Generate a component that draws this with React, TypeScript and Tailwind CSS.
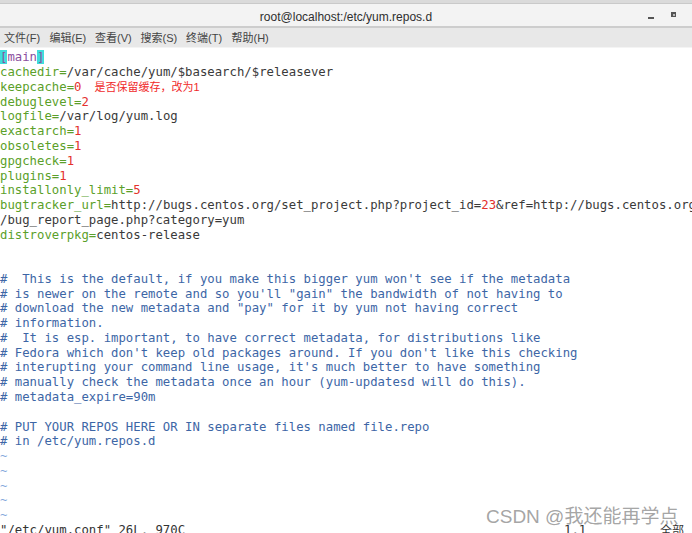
type Seg = { t: string; c: string; bg?: string }

const G = "text-[#5b9f2a]"
const R = "text-[#e3312d]"
const D = "text-[#3a3a3a]"
const B = "text-[#3d66a6]"
const P = "text-[#8a4f9e]"
const T = "text-[#86a8dc]"

const kv = (k: string, v: string, vc = R): Seg[] => [
  { t: k, c: G },
  { t: "=", c: G },
  { t: v, c: vc },
]

const comment = (s: string): Seg[] => [{ t: s, c: B }]

const lines: Seg[][] = [
  [
    { t: "[", c: P, bg: "bg-[#3fdcdc]" },
    { t: "main", c: P },
    { t: "]", c: P, bg: "bg-[#3fdcdc]" },
  ],
  kv("cachedir", "/var/cache/yum/$basearch/$releasever", D),
  kv("keepcache", "0"),
  kv("debuglevel", "2"),
  kv("logfile", "/var/log/yum.log", D),
  kv("exactarch", "1"),
  kv("obsoletes", "1"),
  kv("gpgcheck", "1"),
  kv("plugins", "1"),
  kv("installonly_limit", "5"),
  [
    { t: "bugtracker_url=", c: G },
    { t: "http://bugs.centos.org/set_project.php?project_id=", c: D },
    { t: "23", c: R },
    { t: "&ref=http://bugs.centos.org", c: D },
  ],
  [{ t: "/bug_report_page.php?category=yum", c: D }],
  kv("distroverpkg", "centos-release", D),
  [],
  [],
  comment("#  This is the default, if you make this bigger yum won't see if the metadata"),
  comment("# is newer on the remote and so you'll \"gain\" the bandwidth of not having to"),
  comment("# download the new metadata and \"pay\" for it by yum not having correct"),
  comment("# information."),
  comment("#  It is esp. important, to have correct metadata, for distributions like"),
  comment("# Fedora which don't keep old packages around. If you don't like this checking"),
  comment("# interupting your command line usage, it's much better to have something"),
  comment("# manually check the metadata once an hour (yum-updatesd will do this)."),
  comment("# metadata_expire=90m"),
  [],
  comment("# PUT YOUR REPOS HERE OR IN separate files named file.repo"),
  comment("# in /etc/yum.repos.d"),
  [{ t: "~", c: T }],
  [{ t: "~", c: T }],
  [{ t: "~", c: T }],
  [{ t: "~", c: T }],
  [{ t: "~", c: T }],
]

const menus = ["文件(F)", "编辑(E)", "查看(V)", "搜索(S)", "终端(T)", "帮助(H)"]

export default function App() {
  return (
    <div className="relative w-[692px] h-[533px] overflow-hidden bg-white flex flex-col font-['Liberation_Sans','Noto_Sans_CJK_SC',sans-serif]">
      {/* title bar */}
      <div className="shrink-0 h-[4px] bg-[#dadada] border-b border-[#c9c9c9]" />
      <div className="shrink-0 h-[24px] bg-[#f3f3f3] border-b-2 border-[#cdcdcd] flex items-center pt-[3px] relative">
        <div className="flex-1 text-center text-[12px] text-[#2e2e2e]">root@localhost:/etc/yum.repos.d</div>
        <div className="absolute right-[38px] top-[13px] w-[6px] h-[2px] bg-[#555]" />
        <div className="absolute right-[16px] top-[8px] w-[5px] h-[5px] bg-[#555] flex items-center justify-center">
          <div className="w-[2px] h-[2px] bg-[#bbb]" />
        </div>
      </div>
      {/* menu bar */}
      <div className="shrink-0 h-[20px] bg-[#e8e8e8] border-b border-[#f4f4f4] flex items-center pt-[1px] pl-[4px] gap-[11.5px] text-[11px] text-[#444]">
        {menus.map((m) => (
          <span key={m} className="w-[34px] whitespace-nowrap">{m}</span>
        ))}
      </div>
      {/* editor */}
      <div className="flex-1 min-h-0 overflow-hidden font-['DejaVu_Sans_Mono',monospace] text-[12.3px] leading-[14.78px] whitespace-pre pt-[2.4px]">
        {lines.map((segs, i) => (
          <div key={i} className="h-[14.78px] whitespace-pre">
            {segs.map((s, j) => (
              <span key={j} className={`${s.c} ${s.bg ?? ""}`}>{s.t}</span>
            ))}
            {i === 2 && (
              <span className="ml-[13px] font-['Liberation_Sans','Noto_Sans_CJK_SC',sans-serif] text-[11px] text-[#f02a2a]">
                是否保留缓存，改为1
              </span>
            )}
          </div>
        ))}
        <div className="h-[14.78px] flex text-[#333]">
          <span className="w-[564px]">"/etc/yum.conf" 26L, 970C</span>
          <span className="w-[96px]">1,1</span>
          <span className="font-['Noto_Sans_CJK_SC',sans-serif] text-[12px]">全部</span>
        </div>
      </div>
      {/* watermark */}
      <div className="absolute left-[486px] top-[505px] text-[19px] leading-[24px] text-[#9a9a9a]/90 whitespace-nowrap">
        CSDN @我还能再学点
      </div>
    </div>
  )
}
